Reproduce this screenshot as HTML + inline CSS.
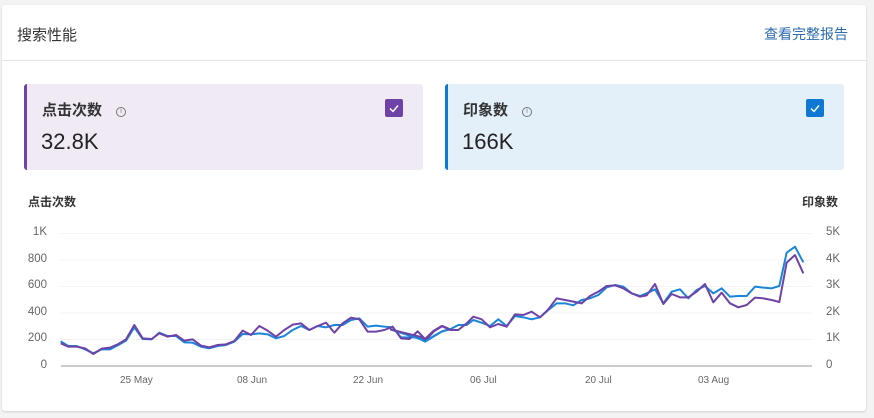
<!DOCTYPE html>
<html><head><meta charset="utf-8"><style>
*{margin:0;padding:0;box-sizing:border-box}
body{width:874px;height:418px;background:#f3f3f3;font-family:"Liberation Sans","Noto Sans CJK SC",sans-serif;position:relative;overflow:hidden}
.card{position:absolute;left:2px;top:5px;width:864px;height:406px;background:#fff;border-radius:3px;box-shadow:0 1px 2px rgba(0,0,0,.15)}
.hdr{position:absolute;left:0;top:0;width:864px;height:56px;border-bottom:1px solid #e6e6e6}
.t{position:absolute;white-space:nowrap}
.m{position:absolute;top:79px;width:399px;height:86px;border-radius:3px}
.cb{position:absolute;right:20px;top:15px;width:18px;height:18px;border-radius:2px}
.info{display:inline-block;width:10px;height:10px;border:1px solid #777;border-radius:50%;font-size:7px;line-height:8px;text-align:center;color:#777;vertical-align:2px;margin-left:14px;font-weight:normal}
.ax{font-size:11.5px;color:#666;position:absolute}
</style></head><body>
<div class="card">
 <div class="hdr">
  <div class="t" style="left:15px;top:19px;font-size:15px;color:#333">搜索性能</div>
  <div class="t" style="right:18px;top:19px;font-size:14px;color:#2b6cb0">查看完整报告</div>
 </div>
 <div class="m" style="left:22px;background:#f0eaf5;border-left:3px solid #6f42a8">
  <div class="t" style="left:15px;top:15px;font-size:15px;font-weight:bold;color:#333">点击次数<span class="info">i</span></div>
  <div class="t" style="left:14px;top:45px;font-size:22px;color:#222">32.8K</div>
  <div class="cb" style="background:#6f42a8"><svg width="18" height="18"><path d="M5 9.5l3 3 5-6" stroke="#fff" stroke-width="1.4" fill="none"/></svg></div>
 </div>
 <div class="m" style="left:443px;background:#e3f0fa;border-left:3px solid #0f78d4">
  <div class="t" style="left:15px;top:15px;font-size:15px;font-weight:bold;color:#333">印象数<span class="info">i</span></div>
  <div class="t" style="left:14px;top:45px;font-size:22px;color:#222">166K</div>
  <div class="cb" style="background:#0f78d4"><svg width="18" height="18"><path d="M5 9.5l3 3 5-6" stroke="#fff" stroke-width="1.4" fill="none"/></svg></div>
 </div>
</div>
<div class="t" style="left:28px;top:193px;font-size:12px;font-weight:bold;color:#333">点击次数</div>
<div class="t" style="left:802px;top:193px;font-size:12px;font-weight:bold;color:#333">印象数</div>
<div class="ax" style="right:827px;top:226px">1K</div>
<div class="ax" style="right:827px;top:253px">800</div>
<div class="ax" style="right:827px;top:279px">600</div>
<div class="ax" style="right:827px;top:306px">400</div>
<div class="ax" style="right:827px;top:332px">200</div>
<div class="ax" style="right:827px;top:359px">0</div>
<div class="ax" style="left:826px;top:226px">5K</div>
<div class="ax" style="left:826px;top:253px">4K</div>
<div class="ax" style="left:826px;top:279px">3K</div>
<div class="ax" style="left:826px;top:306px">2K</div>
<div class="ax" style="left:826px;top:332px">1K</div>
<div class="ax" style="left:826px;top:359px">0</div>
<div class="ax" style="left:120px;top:375px;font-size:10px">25 May</div>
<div class="ax" style="left:237px;top:375px;font-size:10px">08 Jun</div>
<div class="ax" style="left:353px;top:375px;font-size:10px">22 Jun</div>
<div class="ax" style="left:470px;top:375px;font-size:10px">06 Jul</div>
<div class="ax" style="left:585px;top:375px;font-size:10px">20 Jul</div>
<div class="ax" style="left:698px;top:375px;font-size:10px">03 Aug</div>
<svg width="874" height="418" style="position:absolute;left:0;top:0">
 <g stroke="#f3f3f3" stroke-width="1">
  <line x1="61" y1="233.5" x2="812" y2="233.5"/><line x1="61" y1="260" x2="812" y2="260"/><line x1="61" y1="286.5" x2="812" y2="286.5"/><line x1="61" y1="313" x2="812" y2="313"/><line x1="61" y1="339.5" x2="812" y2="339.5"/>
 </g>
 <line x1="61" y1="366" x2="812" y2="366" stroke="#999" stroke-width="1"/>
 <g transform="translate(0,220) scale(0.33333)" fill="none" stroke-width="6" stroke-linejoin="round">
  <polyline stroke="#1a86d9" points="182,364 205,378 230,378 255,388 280,400 305,388 330,388 355,375 378,362 403,322 428,357 455,358 478,338 503,348 528,348 553,367 578,368 603,380 628,385 653,378 678,375 703,365 728,342 753,343 778,340 803,343 828,355 853,348 878,330 903,318 928,330 953,318 978,322 1003,315 1028,315 1053,300 1078,295 1103,320 1128,317 1153,320 1178,322 1203,352 1228,352 1253,352 1278,363 1303,347 1328,333 1350,328"/>
  <polyline stroke="#6f42a8" points="182,370 205,380 230,380 255,385 280,402 305,386 330,383 355,372 378,358 403,315 428,355 455,357 478,340 503,350 528,345 553,362 578,358 603,377 628,382 653,375 678,373 703,363 728,332 753,345 778,318 803,332 828,350 853,330 878,314 903,310 928,330 953,318 978,308 1003,338 1028,310 1053,293 1078,298 1103,335 1128,335 1153,330 1178,320 1203,355 1228,357 1253,334 1278,360 1303,333 1328,318 1350,328"/>
 </g>
 <g transform="translate(420,220) scale(0.33333)" fill="none" stroke-width="6" stroke-linejoin="round">
  <polyline stroke="#1a86d9" points="-90,328 0,357 15,365 40,350 65,335 90,328 115,315 140,315 160,300 185,308 210,318 235,298 260,318 285,288 310,292 335,298 360,292 385,270 410,250 435,250 460,256 485,240 510,235 535,225 560,202 585,195 610,200 635,220 660,228 680,220 705,208 730,250 755,215 780,208 805,235 830,210 855,198 880,220 905,205 930,230 955,228 980,228 1005,200 1030,203 1055,205 1078,198 1100,98 1125,80 1150,127"/>
  <polyline stroke="#6f42a8" points="-90,328 0,350 15,357 40,333 65,318 90,330 115,330 140,310 160,290 185,298 210,322 235,312 260,320 285,283 310,285 335,275 360,292 385,268 410,235 435,240 460,245 485,250 510,228 535,215 560,198 585,196 610,205 635,220 660,230 680,226 705,192 730,252 755,222 780,232 805,232 830,215 855,192 880,247 905,218 930,250 955,262 980,255 1005,233 1030,235 1055,240 1078,246 1100,128 1125,105 1150,160"/>
 </g>
</svg>
</body></html>
